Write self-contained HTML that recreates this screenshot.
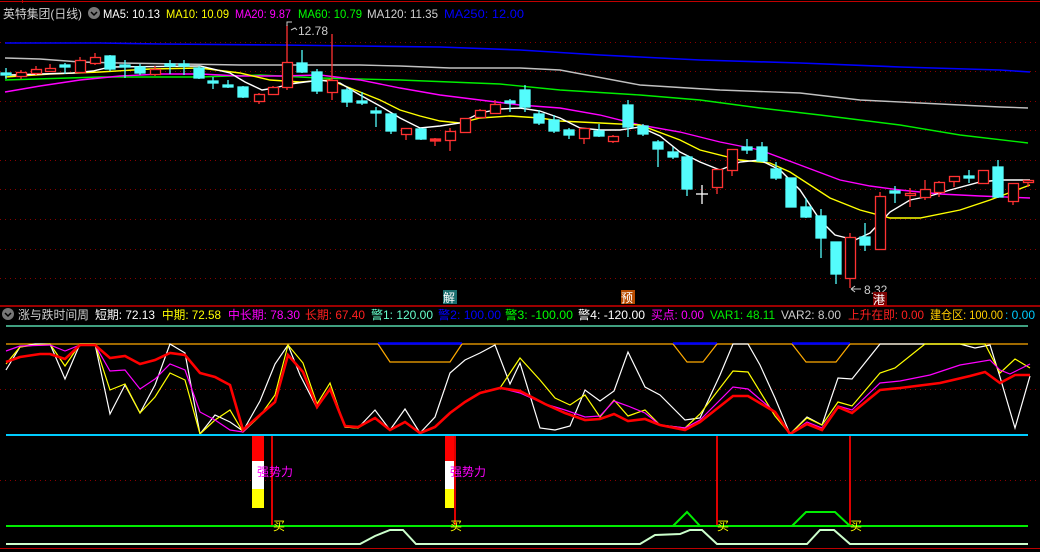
<!DOCTYPE html>
<html><head><meta charset="utf-8"><style>
html,body{margin:0;padding:0;background:#000;width:1040px;height:552px;overflow:hidden}
svg{display:block}
text{font-family:"Liberation Sans","Noto Sans CJK SC",sans-serif;font-size:12px}
</style></head><body>
<svg width="1040" height="552" viewBox="0 0 1040 552" xmlns="http://www.w3.org/2000/svg">
<rect width="1040" height="552" fill="#000"/>
<line x1="0" y1="1.5" x2="1040" y2="1.5" stroke="#c00000"/>
<line x1="22.5" y1="0" x2="22.5" y2="3" stroke="#c00000"/>
<g stroke="#8a0000" stroke-dasharray="1,4">
<line x1="0" y1="42.5" x2="1040" y2="42.5"/><line x1="0" y1="71.5" x2="1040" y2="71.5"/>
<line x1="0" y1="101.5" x2="1040" y2="101.5"/><line x1="0" y1="130.5" x2="1040" y2="130.5"/>
<line x1="0" y1="160.5" x2="1040" y2="160.5"/><line x1="0" y1="189.5" x2="1040" y2="189.5"/>
<line x1="0" y1="219.5" x2="1040" y2="219.5"/><line x1="0" y1="249.5" x2="1040" y2="249.5"/>
<line x1="0" y1="278.5" x2="1040" y2="278.5"/>
<line x1="0" y1="389.5" x2="1040" y2="389.5"/><line x1="0" y1="480.5" x2="1040" y2="480.5"/>
</g>
<text x="3" y="18" fill="#d0d0d0" font-size="14" textLength="79" lengthAdjust="spacingAndGlyphs">英特集团(日线)</text>
<circle cx="94" cy="13" r="6" fill="#777"/><path d="M91 12l3 3 3-3" stroke="#000" stroke-width="1.5" fill="none"/>
<text x="103" y="18" fill="#fff" font-size="13" textLength="57" lengthAdjust="spacingAndGlyphs">MA5: 10.13</text>
<text x="166" y="18" fill="#ffff00" font-size="13" textLength="63" lengthAdjust="spacingAndGlyphs">MA10: 10.09</text>
<text x="235" y="18" fill="#ff00ff" font-size="13" textLength="56" lengthAdjust="spacingAndGlyphs">MA20: 9.87</text>
<text x="298" y="18" fill="#00ff00" font-size="13" textLength="64" lengthAdjust="spacingAndGlyphs">MA60: 10.79</text>
<text x="367" y="18" fill="#d0d0d0" font-size="13" textLength="71" lengthAdjust="spacingAndGlyphs">MA120: 11.35</text>
<text x="444" y="18" fill="#0000ff" font-size="13" textLength="80" lengthAdjust="spacingAndGlyphs">MA250: 12.00</text>
<g fill="none" stroke-width="1.4">
<polyline stroke="#0000ff" stroke-width="1.6" points="5,43 100,43 160,44 280,45 360,46 440,47 520,50 600,55 700,60 800,63 900,67 1000,70 1030,72"/>
<polyline stroke="#c0c0c0" points="5,58 40,59 80,62 120,63 180,64 240,65 300,65 360,65 400,66 450,68 520,68 560,70 640,85 720,90 800,93 860,100 920,103 1000,107 1028,108"/>
<polyline stroke="#00ee00" points="5,80 100,77 200,77 260,75 320,78 400,80 500,84 560,90 640,95 700,100 760,108 820,115 900,125 960,135 1028,143"/>
<polyline stroke="#ff00ff" points="5,92 40,86 80,80 120,76 160,74 200,74 240,76 280,76 320,75 360,80 400,88 440,95 480,100 520,105 560,108 600,115 640,125 680,132 720,142 760,150 800,165 840,180 870,186 900,190 940,194 980,196 1030,198"/>
<polyline stroke="#ffff00" points="5,77 50,74 100,72 150,69 200,68 240,73 270,80 300,82 330,80 350,88 380,100 400,110 420,116 440,121 460,123 480,118 510,116 540,118 560,121 580,122 600,123 640,125 680,140 700,150 740,160 770,163 790,172 830,198 860,210 890,218 920,218 960,210 990,200 1030,185"/>
<polyline stroke="#ffffff" points="10,75 73,73 93,71 110,67 200,66 230,73 245,82 262,90 275,88 290,84 305,82 320,80 340,83 360,95 380,106 400,118 420,128 440,126 460,123 480,113 500,109 520,108 540,111 560,118 580,128 600,130 620,130 640,127 660,136 680,152 700,162 720,170 740,162 760,160 780,170 800,190 820,220 835,235 855,240 870,233 890,212 910,200 930,196 950,190 980,182 1000,180 1030,180"/>
</g>
<g stroke-width="1.3">
<g stroke="#54fcfc" fill="#54fcfc">
<line x1="6" y1="68" x2="6" y2="79"/><rect x="1" y="73" width="10" height="2"/>
<line x1="65" y1="63" x2="65" y2="74"/><rect x="60" y="65" width="10" height="2"/>
<rect x="105" y="56" width="10" height="13"/><line x1="110" y1="55" x2="110" y2="71"/>
<line x1="125" y1="60" x2="125" y2="78"/><rect x="120" y="65" width="10" height="2"/>
<rect x="135" y="67" width="10" height="6"/><line x1="140" y1="64" x2="140" y2="75"/>
<line x1="170" y1="60" x2="170" y2="74"/><rect x="165" y="64" width="10" height="2"/>
<line x1="184" y1="60" x2="184" y2="75"/><rect x="179" y="64" width="10" height="2"/>
<rect x="194" y="68" width="10" height="10"/><line x1="199" y1="66" x2="199" y2="79"/>
<line x1="213" y1="77" x2="213" y2="89"/><rect x="208" y="81" width="10" height="2"/>
<line x1="228" y1="80" x2="228" y2="88"/><rect x="223" y="85" width="10" height="2"/>
<rect x="238" y="87" width="10" height="10"/><line x1="243" y1="86" x2="243" y2="98"/>
<rect x="297" y="63" width="10" height="9"/><line x1="302" y1="50" x2="302" y2="73"/>
<rect x="312" y="72" width="10" height="19"/><line x1="317" y1="69" x2="317" y2="94"/>
<rect x="342" y="90" width="10" height="12"/><line x1="347" y1="88" x2="347" y2="107"/>
<line x1="362" y1="92" x2="362" y2="105"/><rect x="357" y="101" width="10" height="2"/>
<line x1="376" y1="107" x2="376" y2="127"/><rect x="371" y="111" width="10" height="2"/>
<rect x="386" y="114" width="10" height="17"/><line x1="391" y1="114" x2="391" y2="134"/>
<rect x="416" y="129" width="10" height="10"/><line x1="421" y1="128" x2="421" y2="140"/>
<line x1="510" y1="99" x2="510" y2="112"/><rect x="505" y="101" width="10" height="2"/>
<rect x="520" y="90" width="10" height="17"/><line x1="525" y1="85" x2="525" y2="112"/>
<rect x="534" y="114" width="10" height="9"/><line x1="539" y1="110" x2="539" y2="125"/>
<rect x="549" y="120" width="10" height="11"/><line x1="554" y1="115" x2="554" y2="133"/>
<rect x="564" y="130" width="10" height="5"/><line x1="569" y1="128" x2="569" y2="139"/>
<rect x="594" y="131" width="10" height="5"/><line x1="599" y1="124" x2="599" y2="137"/>
<rect x="623" y="105" width="10" height="22"/><line x1="628" y1="100" x2="628" y2="137"/>
<rect x="638" y="126" width="10" height="8"/><line x1="643" y1="124" x2="643" y2="136"/>
<rect x="653" y="142" width="10" height="7"/><line x1="658" y1="140" x2="658" y2="167"/>
<rect x="668" y="152" width="10" height="5"/><line x1="673" y1="147" x2="673" y2="159"/>
<rect x="682" y="157" width="10" height="32"/><line x1="687" y1="155" x2="687" y2="196"/>
<line x1="747" y1="139" x2="747" y2="154"/><rect x="742" y="147" width="10" height="3"/>
<rect x="757" y="147" width="10" height="14"/><line x1="762" y1="142" x2="762" y2="162"/>
<rect x="771" y="169" width="10" height="9"/><line x1="776" y1="162" x2="776" y2="180"/>
<rect x="786" y="178" width="10" height="29"/>
<rect x="801" y="207" width="10" height="10"/><line x1="806" y1="198" x2="806" y2="218"/>
<rect x="816" y="216" width="10" height="22"/><line x1="821" y1="209" x2="821" y2="258"/>
<rect x="831" y="242" width="10" height="32"/><line x1="836" y1="242" x2="836" y2="284"/>
<rect x="860" y="237" width="10" height="8"/><line x1="865" y1="223" x2="865" y2="251"/>
<line x1="895" y1="186" x2="895" y2="203"/><rect x="890" y="191" width="10" height="2"/>
<line x1="969" y1="170" x2="969" y2="183"/><rect x="964" y="176" width="10" height="2"/>
<rect x="993" y="167" width="10" height="30"/><line x1="998" y1="160" x2="998" y2="198"/>
</g>
<g stroke="#fff"><line x1="702" y1="185" x2="702" y2="204"/><line x1="696" y1="194" x2="708" y2="194"/></g>
<g stroke="#ff3232" fill="#000">
<line x1="21" y1="70" x2="21" y2="79"/><rect x="16.5" y="72.5" width="10" height="4"/>
<line x1="36" y1="66" x2="36" y2="75"/><rect x="31.5" y="69.5" width="10" height="4"/>
<line x1="50" y1="64" x2="50" y2="72"/><rect x="45.5" y="68.5" width="10" height="3"/>
<line x1="80" y1="57" x2="80" y2="73"/><rect x="75.5" y="60.5" width="10" height="12"/>
<line x1="95" y1="53" x2="95" y2="65"/><rect x="90.5" y="57.5" width="10" height="6"/>
<line x1="155" y1="66" x2="155" y2="76"/><rect x="150.5" y="69.5" width="10" height="5"/>
<line x1="259" y1="93" x2="259" y2="104"/><rect x="254.5" y="94.5" width="10" height="7"/>
<line x1="273" y1="86" x2="273" y2="95"/><rect x="268.5" y="87.5" width="10" height="7"/>
<line x1="287" y1="25" x2="287" y2="90"/><rect x="282.5" y="62.5" width="10" height="25"/>
<line x1="332" y1="34" x2="332" y2="100"/><rect x="327.5" y="80.5" width="10" height="12"/>
<line x1="406" y1="128" x2="406" y2="140"/><rect x="401.5" y="128.5" width="10" height="6"/>
<line x1="435" y1="138" x2="435" y2="146"/><rect x="430.5" y="139" width="10" height="2" fill="#ff3232"/>
<line x1="450" y1="128" x2="450" y2="151"/><rect x="445.5" y="131.5" width="10" height="9"/>
<line x1="465" y1="118" x2="465" y2="133"/><rect x="460.5" y="118.5" width="10" height="14"/>
<line x1="480" y1="109" x2="480" y2="118"/><rect x="475.5" y="110.5" width="10" height="7"/>
<line x1="495" y1="100" x2="495" y2="114"/><rect x="490.5" y="104.5" width="10" height="9"/>
<line x1="584" y1="128" x2="584" y2="144"/><rect x="579.5" y="128.5" width="10" height="10"/>
<line x1="613" y1="135" x2="613" y2="143"/><rect x="608.5" y="136.5" width="10" height="5"/>
<line x1="717" y1="169" x2="717" y2="194"/><rect x="712.5" y="169.5" width="10" height="18"/>
<line x1="732" y1="149" x2="732" y2="176"/><rect x="727.5" y="149.5" width="10" height="21"/>
<line x1="850" y1="233" x2="850" y2="288"/><rect x="845.5" y="237.5" width="10" height="41"/>
<line x1="880" y1="192" x2="880" y2="249"/><rect x="875.5" y="196.5" width="10" height="53"/>
<line x1="910" y1="188" x2="910" y2="207"/><rect x="905.5" y="193.5" width="10" height="2"/>
<line x1="925" y1="180" x2="925" y2="200"/><rect x="920.5" y="189.5" width="10" height="8"/>
<line x1="939" y1="181" x2="939" y2="197"/><rect x="934.5" y="182.5" width="10" height="10"/>
<line x1="954" y1="176" x2="954" y2="187"/><rect x="949.5" y="176.5" width="10" height="5"/>
<line x1="983" y1="170" x2="983" y2="183"/><rect x="978.5" y="170.5" width="10" height="13"/>
<line x1="1013" y1="183" x2="1013" y2="205"/><rect x="1008.5" y="183.5" width="10" height="18"/>
<line x1="1028" y1="180" x2="1028" y2="187"/><rect x="1023.5" y="180.5" width="10" height="2"/>
</g>
</g>
<path d="M287 26v-4h5" stroke="#ccc" fill="none"/><path d="M291 30l4-2 2 2" stroke="#ccc" fill="none"/>
<text x="298" y="35" fill="#ccc">12.78</text>
<path d="M851 289h10M851 289l4-3M851 289l4 3" stroke="#ccc" fill="none"/>
<text x="864" y="294" fill="#ccc">8.32</text>
<rect x="443" y="290" width="14" height="14" fill="#1a6e6e"/><text x="443" y="302" fill="#fff" font-size="12">解</text>
<rect x="621" y="290" width="14" height="14" fill="#b84c00"/><text x="621" y="302" fill="#fff" font-size="12">预</text>
<rect x="873" y="292" width="14" height="14" fill="#7a0000"/><text x="873" y="304" fill="#fff" font-size="12">港</text>
<line x1="0" y1="306" x2="1040" y2="306" stroke="#d00000" stroke-width="1.5"/>
<circle cx="8" cy="314" r="6" fill="#777"/><path d="M5 313l3 3 3-3" stroke="#000" stroke-width="1.5" fill="none"/>
<text x="18" y="319" fill="#d0d0d0" textLength="71" lengthAdjust="spacingAndGlyphs">涨与跌时间周</text>
<text x="95" y="319" fill="#fff" textLength="60" lengthAdjust="spacingAndGlyphs">短期: 72.13</text>
<text x="162" y="319" fill="#ffff00" textLength="59" lengthAdjust="spacingAndGlyphs">中期: 72.58</text>
<text x="228" y="319" fill="#ff00ff" textLength="72" lengthAdjust="spacingAndGlyphs">中长期: 78.30</text>
<text x="305" y="319" fill="#ff2020" textLength="60" lengthAdjust="spacingAndGlyphs">长期: 67.40</text>
<text x="371" y="319" fill="#66ffcc" textLength="62" lengthAdjust="spacingAndGlyphs">警1: 120.00</text>
<text x="438" y="319" fill="#0000ff" textLength="63" lengthAdjust="spacingAndGlyphs">警2: 100.00</text>
<text x="505" y="319" fill="#00ff00" textLength="68" lengthAdjust="spacingAndGlyphs">警3: -100.00</text>
<text x="578" y="319" fill="#fff" textLength="67" lengthAdjust="spacingAndGlyphs">警4: -120.00</text>
<text x="651" y="319" fill="#ff00ff" textLength="53" lengthAdjust="spacingAndGlyphs">买点: 0.00</text>
<text x="710" y="319" fill="#00ee00" textLength="65" lengthAdjust="spacingAndGlyphs">VAR1: 48.11</text>
<text x="781" y="319" fill="#ccc" textLength="60" lengthAdjust="spacingAndGlyphs">VAR2: 8.00</text>
<text x="848" y="319" fill="#ff2020" textLength="76" lengthAdjust="spacingAndGlyphs">上升在即: 0.00</text>
<text x="930" y="319" fill="#ffcc00" textLength="73" lengthAdjust="spacingAndGlyphs">建仓区: 100.00</text>
<text x="1005" y="319" fill="#00ccff">: 0.00</text>
<line x1="6" y1="326" x2="1028" y2="326" stroke="#66ffcc" stroke-width="1.3"/>
<line x1="6" y1="344" x2="1028" y2="344" stroke="#ffaa00" stroke-width="1.3"/>
<g stroke="#0000ff" stroke-width="2.5"><line x1="378" y1="343.5" x2="462" y2="343.5"/><line x1="673" y1="343.5" x2="717" y2="343.5"/><line x1="792" y1="343.5" x2="850" y2="343.5"/></g>
<g stroke="#ffaa00" fill="none" stroke-width="1.2"><polyline points="378,344 390,362 450,362 462,344"/><polyline points="673,344 687,362 703,362 717,344"/><polyline points="792,344 806,362 836,362 850,344"/></g>
<g fill="none" stroke-width="1.2">
<polyline stroke="#fff" points="6,370 20,347 35,344 50,344 65,379 80,344 95,344 110,414 125,385 140,413 155,385 170,344 185,353 200,434 215,415 230,422 243,431 260,401 275,364 288,345 300,375 317,408 330,388 345,427 358,428 375,410 390,430 405,409 420,433 435,417 450,373 465,360 480,353 495,345 510,384 520,363 540,428 555,430 570,426 585,390 600,401 614,391 628,352 645,387 660,395 685,420 700,418 720,375 733,344 748,344 760,365 775,398 790,434 807,417 822,425 838,378 852,379 880,344 960,344 975,348 990,345 1000,377 1015,428 1030,376"/>
<polyline stroke="#ffff00" points="6,364 20,347 35,345 50,344 65,366 80,344 95,344 110,390 125,384 140,413 155,397 170,373 185,380 200,434 215,420 230,410 243,432 260,416 275,395 288,345 303,363 317,404 330,383 345,427 358,428 375,418 390,430 405,422 420,433 435,427 450,413 465,402 480,393 500,388 520,358 540,380 555,398 570,405 585,395 600,417 614,400 628,416 645,410 660,425 685,428 700,414 733,371 748,372 775,416 790,434 807,418 822,425 838,402 852,406 880,373 895,368 925,344 985,344 1000,373 1015,359 1030,368"/>
<polyline stroke="#ff00ff" points="6,351 20,346 50,345 65,351 80,345 95,345 110,371 125,370 140,389 155,379 170,364 185,370 200,412 215,420 230,430 243,432 260,415 275,402 288,355 303,372 317,407 330,389 345,426 358,427 375,418 390,430 405,422 420,433 435,427 450,413 465,402 480,393 500,388 520,393 545,404 565,410 585,417 600,416 614,401 628,406 645,413 660,425 685,428 700,420 733,387 748,389 775,412 790,434 807,422 822,428 838,406 852,410 880,383 900,381 930,375 960,365 990,360 1000,370 1010,374 1030,364"/>
<polyline stroke="#ff0000" stroke-width="2.6" points="6,362 20,357 40,354 50,354 65,359 80,345 95,345 110,358 125,356 140,364 155,360 170,353 185,355 200,373 215,377 230,385 243,430 260,415 275,402 288,355 303,372 317,407 330,389 345,426 358,427 375,418 390,430 405,422 420,433 435,427 450,413 465,402 480,393 500,388 520,391 545,404 565,413 585,420 600,419 614,414 628,421 645,419 660,425 685,430 700,422 733,396 748,396 775,412 790,434 807,424 822,430 838,407 852,413 880,390 900,388 940,383 970,376 985,372 1000,383 1015,375 1030,375"/>
</g>
<line x1="6" y1="435" x2="1028" y2="435" stroke="#00ccff" stroke-width="2"/>
<rect x="252" y="436" width="12" height="25" fill="#ff0000"/><rect x="252" y="461" width="12" height="28" fill="#fff"/><rect x="252" y="489" width="12" height="19" fill="#ffff00"/>
<rect x="445" y="436" width="11" height="25" fill="#ff0000"/><rect x="445" y="461" width="11" height="28" fill="#fff"/><rect x="445" y="489" width="11" height="19" fill="#ffff00"/>
<g stroke="#dd0000" stroke-width="2"><line x1="272" y1="436" x2="272" y2="526"/><line x1="455" y1="436" x2="455" y2="526"/><line x1="717" y1="436" x2="717" y2="526"/><line x1="850" y1="436" x2="850" y2="526"/></g>
<text x="257" y="476" fill="#ff00ff" font-size="13">强势力</text>
<text x="450" y="476" fill="#ff00ff" font-size="13">强势力</text>
<line x1="6" y1="526" x2="1028" y2="526" stroke="#00ee00" stroke-width="2"/>
<polyline fill="none" stroke="#00ee00" stroke-width="2" points="673,526 687,512 700,526"/>
<polyline fill="none" stroke="#00ee00" stroke-width="2" points="792,526 806,512 835,512 850,526"/>
<polyline fill="none" stroke="#ccffcc" stroke-width="2" points="6,544 360,544 375,536 390,530 403,530 416,544 640,544 655,535 680,534 690,530 702,530 717,544 807,544 820,530 834,530 850,544 1028,544"/>
<line x1="0" y1="548.5" x2="1040" y2="548.5" stroke="#bb0000"/>
<g fill="#ffff00" font-size="11"><text x="273" y="530">买</text><text x="450" y="530">买</text><text x="717" y="530">买</text><text x="850" y="530">买</text></g>
</svg>
</body></html>
